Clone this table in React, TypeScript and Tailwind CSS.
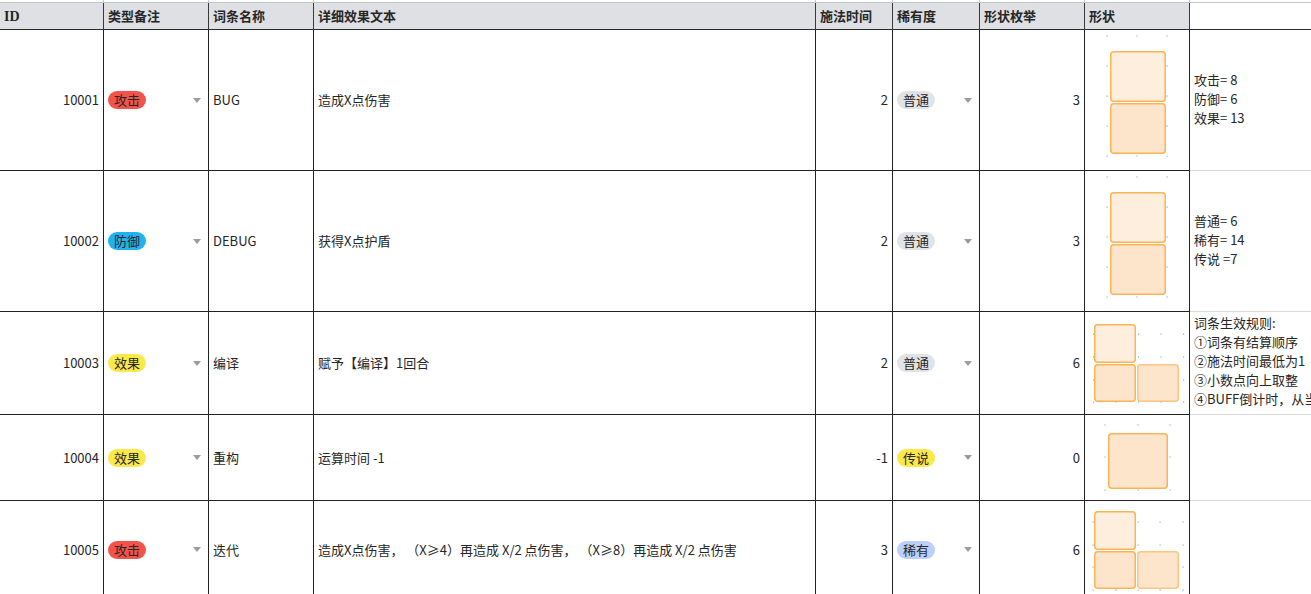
import React from "react";

const COLS = [
  "w-[104px]",
  "w-[105px]",
  "w-[105px]",
  "w-[502px]",
  "w-[77px]",
  "w-[87px]",
  "w-[105px]",
  "w-[105px]",
];

type Sq = { x: number; y: number; w: number; h: number; light?: boolean; faint?: boolean };
type Shape = { xs: number[]; ys: number[]; sq: Sq[] };

const shapes: Shape[] = [
  {
    xs: [22, 52, 82],
    ys: [6, 36, 66, 96, 126],
    sq: [
      { x: 25, y: 21, w: 56, h: 51, light: true },
      { x: 25, y: 73, w: 56, h: 51 },
    ],
  },
  {
    xs: [22, 52, 82],
    ys: [6, 36, 66, 96, 126],
    sq: [
      { x: 25, y: 21, w: 56, h: 51, light: true },
      { x: 25, y: 73, w: 56, h: 51 },
    ],
  },
  {
    xs: [8.5, 31, 53.5, 76, 98.5],
    ys: [22, 45, 68, 90],
    sq: [
      { x: 9, y: 12, w: 42, h: 39, light: true },
      { x: 9, y: 52, w: 42, h: 38 },
      { x: 52, y: 52, w: 42, h: 38, faint: true },
    ],
  },
  {
    xs: [20, 53, 85],
    ys: [10, 42, 75],
    sq: [{ x: 23, y: 18, w: 60, h: 56 }],
  },
  {
    xs: [8, 31, 53, 75, 98],
    ys: [21, 44, 66, 89],
    sq: [
      { x: 9, y: 10, w: 42, h: 39, light: true },
      { x: 9, y: 50, w: 42, h: 38 },
      { x: 52, y: 50, w: 42, h: 38, faint: true },
    ],
  },
];

function ShapeSvg({ s, h }: { s: Shape; h: number }) {
  return (
    <svg width={104} height={h} viewBox={`0 0 104 ${h}`} className="block">
      {s.xs.map((x) =>
        s.ys.map((y) => (
          <rect key={`${x}-${y}`} x={x - 0.5} y={y - 0.5} width={1.2} height={1.2} fill="#a8a8a8" />
        ))
      )}
      {s.sq.map((q, i) => (
        <rect
          key={i}
          x={q.x + 0.75}
          y={q.y + 0.75}
          width={q.w - 1.5}
          height={q.h - 1.5}
          rx={3}
          fill={q.light ? "#fdeddb" : "#fde4c8"}
          fillOpacity={0.95}
          stroke={q.faint ? "#fcc582" : "#fbb356"}
          strokeWidth={1.5}
        />
      ))}
    </svg>
  );
}

function Arrow() {
  return (
    <svg width="8" height="5" viewBox="0 0 8 5" className="block shrink-0">
      <path d="M0 0 L8 0 L4 5 Z" fill="#9a9ca1" />
    </svg>
  );
}

const pillColors: Record<string, string> = {
  攻击: "bg-[#f2534b]",
  防御: "bg-[#21b2f2]",
  效果: "bg-[#fbe94c]",
  普通: "bg-[#e2e3e6]",
  传说: "bg-[#fbe94c]",
  稀有: "bg-[#bcd0fb]",
};

function Pill({ text }: { text: string }) {
  return (
    <span className={`inline-block h-[18px] rounded-full px-[6px] text-[13px] leading-[18px] text-[#262626] ${pillColors[text]}`}>
      {text}
    </span>
  );
}

const rows = [
  { h: 141, hc: "h-[141px]", id: "10001", type: "攻击", name: "BUG", text: "造成X点伤害", time: "2", rar: "普通", en: "3", notes: ["攻击= 8", "防御= 6", "效果= 13"], top: false },
  { h: 141, hc: "h-[141px]", id: "10002", type: "防御", name: "DEBUG", text: "获得X点护盾", time: "2", rar: "普通", en: "3", notes: ["普通= 6", "稀有= 14", "传说 =7"], top: false },
  { h: 103, hc: "h-[103px]", id: "10003", type: "效果", name: "编译", text: "赋予【编译】1回合", time: "2", rar: "普通", en: "6", notes: ["词条生效规则:", "①词条有结算顺序", "②施法时间最低为1", "③小数点向上取整", "④BUFF倒计时，从当前回合开始计算"], top: true },
  { h: 86, hc: "h-[86px]", id: "10004", type: "效果", name: "重构", text: "运算时间 -1", time: "-1", rar: "传说", en: "0", notes: [], top: false },
  { h: 98, hc: "h-[98px]", id: "10005", type: "攻击", name: "迭代", text: "造成X点伤害， （X≥4）再造成 X/2 点伤害， （X≥8）再造成 X/2 点伤害", time: "3", rar: "稀有", en: "6", notes: [], top: false },
];

const headers = ["ID", "类型备注", "词条名称", "详细效果文本", "施法时间", "稀有度", "形状枚举", "形状"];

const cell = "shrink-0 flex items-center border-r border-b border-[#222]";

export default function App() {
  return (
    <div className="w-[1311px] h-[594px] overflow-hidden bg-white text-[13px] text-[#262626] font-['Noto_Sans_CJK_SC','Noto_Sans',sans-serif]">
      <div className="flex h-[2px]">
        {COLS.map((w, i) => (
          <div key={i} className={`shrink-0 border-r border-[#c9c9c9] ${w}`} />
        ))}
        <div className="flex-1" />
      </div>
      <div className="flex h-[28px] border-t border-b border-t-[#c2c4c8] border-b-[#2a2a2a]">
        {headers.map((h, i) => (
          <div
            key={i}
            className={`shrink-0 flex items-center border-r border-[#3a3a3a] bg-[#dfe0e4] px-[4px] font-bold text-[#262626] ${COLS[i]} ${
              i === 0 ? "font-['Liberation_Serif',serif] text-[14px]" : "text-[13px]"
            }`}
          >
            {h}
          </div>
        ))}
        <div className="flex-1 bg-white" />
      </div>
      {rows.map((r, ri) => (
        <div key={ri} className={`flex ${r.hc}`}>
          <div className={`${cell} ${COLS[0]} justify-end pr-[4px]`}>{r.id}</div>
          <div className={`${cell} ${COLS[1]} justify-between pl-[4px] pr-[7px]`}>
            <Pill text={r.type} />
            <Arrow />
          </div>
          <div className={`${cell} ${COLS[2]} pl-[4px]`}>{r.name}</div>
          <div className={`${cell} ${COLS[3]} pl-[4px] whitespace-pre`}>{r.text}</div>
          <div className={`${cell} ${COLS[4]} justify-end pr-[4px]`}>{r.time}</div>
          <div className={`${cell} ${COLS[5]} justify-between pl-[4px] pr-[7px]`}>
            <Pill text={r.rar} />
            <Arrow />
          </div>
          <div className={`${cell} ${COLS[6]} justify-end pr-[4px]`}>{r.en}</div>
          <div className={`shrink-0 border-r border-b border-[#222] overflow-hidden ${COLS[7]}`}>
            <ShapeSvg s={shapes[ri]} h={r.h - 1} />
          </div>
          <div
            className={`flex-1 min-w-0 flex flex-col ${
              r.top ? "justify-start pt-[1px]" : "justify-center pb-[4px]"
            } border-b border-[#dadada] pl-[4px] overflow-hidden`}
          >
            {r.notes.map((n, i) => (
              <div key={i} className="whitespace-nowrap leading-[19px]">
                {n}
              </div>
            ))}
          </div>
        </div>
      ))}
    </div>
  );
}
